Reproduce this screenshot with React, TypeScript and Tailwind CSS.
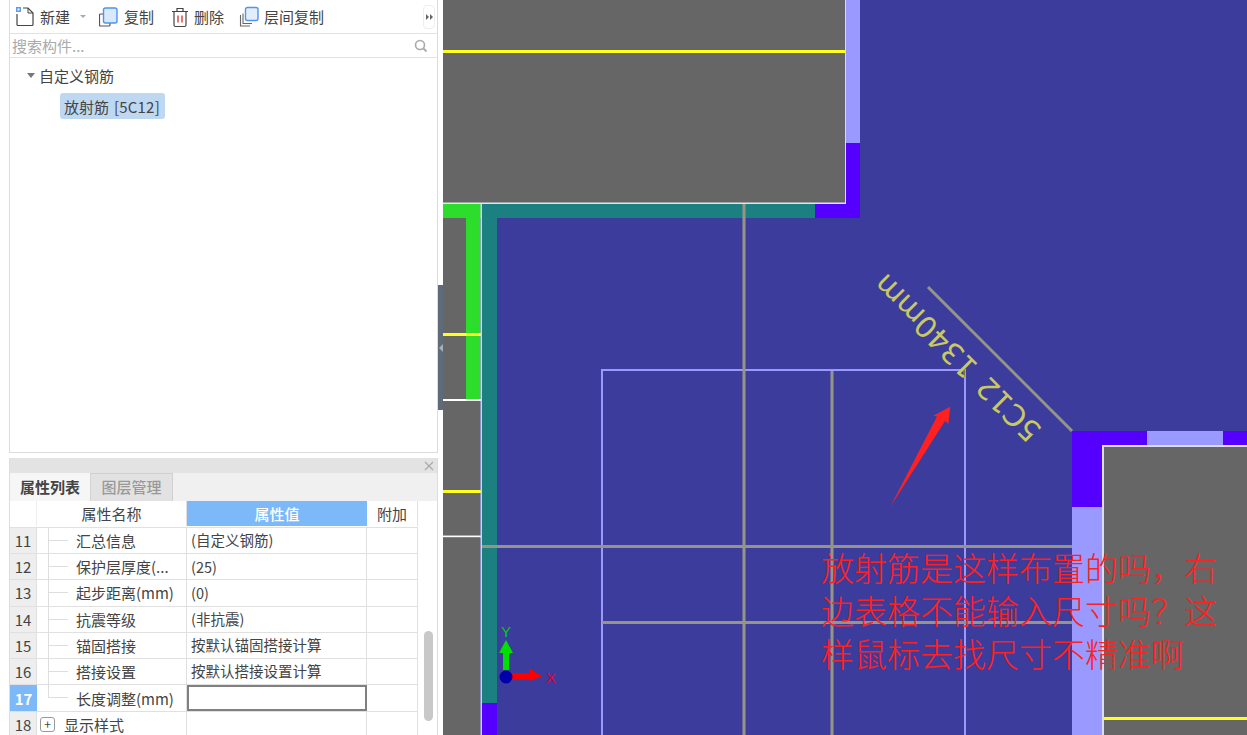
const font = "font-['Noto_Sans_CJK_SC','Liberation_Sans',sans-serif]";

const rows = [
  { n: 11, name: "汇总信息", value: "(自定义钢筋)" },
  { n: 12, name: "保护层厚度(...", value: "(25)" },
  { n: 13, name: "起步距离(mm)", value: "(0)" },
  { n: 14, name: "抗震等级", value: "(非抗震)" },
  { n: 15, name: "锚固搭接", value: "按默认锚固搭接计算" },
  { n: 16, name: "搭接设置", value: "按默认搭接设置计算" },
];

function NewIcon() {
  return (
    <svg width="20" height="22" viewBox="0 0 20 22" fill="none">
      <path d="M2 8v10.500a1 1 0 0 0 1 1h14a1 1 0 0 0 1-1V7l-5-5H8" stroke="#444" strokeWidth="1.2" />
      <path d="M13 2v5h5" stroke="#444" strokeWidth="1" />
      <rect x="1" y="1" width="5" height="5" fill="#5b9bf0" />
      <rect x="2.500" y="2.500" width="2" height="2" fill="#fff" />
    </svg>
  );
}

function CopyIcon() {
  return (
    <svg width="20" height="22" viewBox="0 0 20 22" fill="none">
      <path d="M4 8H1.500a1 1 0 0 0-1 1v10a1 1 0 0 0 1 1H10a1 1 0 0 0 1-1v-2" stroke="#555" strokeWidth="1.2" />
      <rect x="4.500" y="2" width="13.500" height="15" rx="2" fill="#d9e8fb" stroke="#4f94ee" strokeWidth="1.4" />
    </svg>
  );
}

function TrashIcon() {
  return (
    <svg width="18" height="22" viewBox="0 0 18 22" fill="none">
      <path d="M1 5.500h16M6 5V2.500h6V5" stroke="#444" strokeWidth="1.2" />
      <path d="M3 6v13a1.500 1.500 0 0 0 1.500 1.500h9A1.500 1.500 0 0 0 15 19V6" stroke="#444" strokeWidth="1.2" />
      <path d="M7 9.500v7M11 9.500v7" stroke="#e23b3b" strokeWidth="1.4" />
    </svg>
  );
}

function LayerCopyIcon() {
  return (
    <svg width="20" height="22" viewBox="0 0 20 22" fill="none">
      <path d="M1.500 9v11H11M4 7.500v10h9" stroke="#666" strokeWidth="1.1" />
      <rect x="6.500" y="1.500" width="12.500" height="13" rx="2" fill="#e4eefb" stroke="#4f94ee" strokeWidth="1.4" />
    </svg>
  );
}

function ToolItem({ icon, label, className }: { icon: React.ReactNode; label: string; className: string }) {
  return (
    <div className={`flex items-center gap-[5px] ${className}`}>
      {icon}
      <span>{label}</span>
    </div>
  );
}

function ComponentPanel() {
  return (
    <div className="h-[453px] flex flex-col border-x border-b border-[#dcdcdc] bg-white">
      <div className="h-[34px] flex items-center border-b border-[#e2e2e2] pl-[5px] text-[#444]">
        <ToolItem icon={<NewIcon />} label="新建" className="w-[64px]" />
        <span className="w-[20px] pl-[1px]">
          <span className="block w-0 h-0 border-x-[3px] border-x-transparent border-t-[3px] border-t-[#aaa]" />
        </span>
        <ToolItem icon={<CopyIcon />} label="复制" className="w-[72px]" />
        <ToolItem icon={<TrashIcon />} label="删除" className="w-[68px]" />
        <ToolItem icon={<LayerCopyIcon />} label="层间复制" className="w-[100px]" />
        <div className="ml-auto mr-[2px] h-[24px] w-[12px] flex items-center justify-center gap-px rounded-sm border border-[#eee]">
          <span className="w-0 h-0 border-y-[3px] border-y-transparent border-l-[3px] border-l-[#666]" />
          <span className="w-0 h-0 border-y-[3px] border-y-transparent border-l-[3px] border-l-[#666]" />
        </div>
      </div>
      <div className="h-[24px] flex items-center justify-between border-b border-[#e2e2e2] pl-[2px] pr-[9px] text-[#aaa]">
        <span>搜索构件...</span>
        <svg width="14" height="14" viewBox="0 0 14 14" fill="none">
          <circle cx="6" cy="6" r="4.500" stroke="#aaa" strokeWidth="1.6" />
          <path d="M9.500 9.500L12.500 12.500" stroke="#aaa" strokeWidth="1.8" />
        </svg>
      </div>
      <div className="flex-1 pt-[4px] text-[#444]">
        <div className="h-[26px] flex items-center pl-[17px]">
          <span className="w-0 h-0 mr-[4px] border-x-[4px] border-x-transparent border-t-[5px] border-t-[#777]" />
          <span>自定义钢筋</span>
        </div>
        <div className="mt-[5px] ml-[50px] w-[105px] h-[26px] flex items-center pl-[4px] rounded-[3px] bg-[#bfd8f2]">
          <span>放射筋</span>
          <span className="ml-[5px] tracking-[0.2px]">[5C12]</span>
        </div>
      </div>
    </div>
  );
}

function NameCell({ name, last }: { name: string; last?: boolean }) {
  return (
    <div className="w-[150px] h-full flex items-center border-r border-[#e0e0e0] text-[#444]">
      <span className={`ml-[11px] w-[20px] border-l border-[#dedede] ${last ? "h-1/2 self-start border-b" : "h-full flex items-center"}`}>
        {!last && <span className="block h-px w-full bg-[#dedede]" />}
      </span>
      <span className="ml-[8px] whitespace-nowrap">{name}</span>
    </div>
  );
}

function PropertyPanel() {
  return (
    <div className="flex-1 flex flex-col border-x border-[#dcdcdc] bg-white min-h-0">
      <div className="h-[15px] flex items-center justify-end bg-[#e3e3e3] pr-[3px]">
        <svg width="10" height="10" viewBox="0 0 10 10">
          <path d="M1 1L9 9M9 1L1 9" stroke="#aaa" strokeWidth="1.3" />
        </svg>
      </div>
      <div className="h-[28px] flex items-end bg-[#f0f0f0]">
        <div className="w-[81px] h-[28px] pb-[2px] flex items-center justify-center bg-[#f6f6f6] border-r border-[#d4d4d4] font-bold text-[#444]">
          属性列表
        </div>
        <div className="w-[82px] h-[28px] pb-[2px] flex items-center justify-center bg-[#e2e2e2] border-r border-t border-[#d0d0d0] font-medium text-[#999]">
          图层管理
        </div>
      </div>
      <div className="flex-1 flex min-h-0">
        <div className="w-[408px] shrink-0">
          <div className="h-[27px] pb-px flex items-center border-b border-[#e0e0e0]">
            <div className="w-[27px] h-full border-r border-[#eee]" />
            <div className="w-[150px] h-full flex items-center justify-center border-r border-[#e0e0e0] text-[#444]">属性名称</div>
            <div className="w-[180px] h-full flex items-center justify-center bg-[#7db8f8] font-medium text-white">属性值</div>
            <div className="w-[51px] h-full flex items-center justify-center border-r border-[#e0e0e0] text-[#444]">附加</div>
          </div>
          {rows.map((r) => (
            <div key={r.n} className="h-[26.2px] flex items-center border-b border-[#e0e0e0]">
              <div className="w-[27px] h-full flex items-center justify-center bg-[#eeeeee] border-r border-[#e0e0e0] text-[#444]">{r.n}</div>
              <NameCell name={r.name} />
              <div className="w-[180px] h-full flex items-center pl-[4px] border-r border-[#e0e0e0] whitespace-nowrap text-[14.5px] text-[#444]">{r.value}</div>
              <div className="w-[51px] h-full border-r border-[#e0e0e0]" />
            </div>
          ))}
          <div className="h-[27px] flex items-center border-b border-[#e0e0e0]">
            <div className="w-[27px] h-full flex items-center justify-center bg-[#7db8f8] font-bold text-white">17</div>
            <NameCell name="长度调整(mm)" last />
            <div className="w-[180px] h-full border-2 border-[#808080]" />
            <div className="w-[51px] h-full border-r border-[#e0e0e0]" />
          </div>
          <div className="h-[26px] pb-[2px] flex items-center">
            <div className="w-[27px] h-full flex items-center justify-center bg-[#eeeeee] border-r border-[#e0e0e0] text-[#444]">18</div>
            <div className="w-[150px] h-full flex items-center border-r border-[#e0e0e0] text-[#444]">
              <span className="ml-[3px] mr-[9px] w-[15px] h-[15px] flex items-center justify-center rounded-[3px] border border-[#999] text-[12px] leading-none">+</span>
              <span>显示样式</span>
            </div>
            <div className="w-[180px] h-full border-r border-[#e0e0e0]" />
            <div className="w-[51px] h-full border-r border-[#e0e0e0]" />
          </div>
        </div>
        <div className="flex-1 pt-[130px] pl-[6px]">
          <div className="w-[9px] h-[90px] rounded-full bg-[#c8c8c8]" />
        </div>
      </div>
    </div>
  );
}

// coordinates below are in the page's own pixels, the group shifts them into the canvas
function Drawing() {
  const gray = "#666666";
  const violet = "#5500ff";
  const lilac = "#9999ff";
  const rebar = "#959585";
  const yellow = "#ffff20";
  return (
    <svg className="absolute inset-0" width="804" height="735" viewBox="0 0 804 735">
      <g transform="translate(-443 0)">
        <rect x="443" y="0" width="402" height="203" fill={gray} />
        <rect x="443" y="50" width="402" height="3" fill={yellow} />
        <rect x="845" y="0" width="1.500" height="204" fill="#d8d8ee" />
        <rect x="443" y="202.500" width="403" height="2" fill="#e4e4ee" />
        <rect x="846" y="0" width="14" height="143" fill={lilac} />
        <rect x="846" y="143" width="14" height="75" fill={violet} />
        <rect x="815" y="204" width="45" height="14" fill={violet} />
        <rect x="482" y="204" width="333" height="14" fill="#1c8080" />
        <rect x="482" y="204" width="15" height="499" fill="#1c8080" />
        <rect x="482" y="703" width="15" height="32" fill={violet} />
        <rect x="443" y="204" width="38" height="14" fill="#2cdd2c" />
        <rect x="466" y="218" width="14.500" height="181" fill="#2cdd2c" />
        <rect x="443" y="218" width="23" height="181" fill={gray} />
        <rect x="443" y="399" width="38" height="2" fill="#fff" />
        <rect x="443" y="401" width="37.500" height="134.500" fill={gray} />
        <rect x="443" y="535.500" width="38" height="2" fill="#fff" />
        <rect x="443" y="537.500" width="37.500" height="198" fill={gray} />
        <rect x="443" y="333" width="38" height="3" fill={yellow} />
        <rect x="443" y="490" width="38" height="3" fill={yellow} />
        <rect x="480.500" y="204" width="1.500" height="531" fill="#d0d0ff" />
        <path d="M602 735V370H965V735" stroke={lilac} strokeWidth="2" fill="none" />
        <g stroke={rebar} strokeWidth="3">
          <path d="M744 204V735" />
          <path d="M832 371V735" />
          <path d="M482 546.500H1100" />
          <path d="M602 622.500H1072" />
        </g>
        <path d="M928 287L1072 431" stroke={rebar} strokeWidth="3" />
        <rect x="1072" y="431" width="75" height="15" fill={violet} />
        <rect x="1147" y="431" width="76" height="15" fill={lilac} />
        <rect x="1223" y="431" width="24" height="15" fill={violet} />
        <rect x="1072" y="446" width="30" height="61" fill={violet} />
        <rect x="1072" y="507" width="30" height="228" fill={lilac} />
        <rect x="1102" y="445" width="145" height="290" fill="#dcdcf0" />
        <rect x="1104" y="447" width="143" height="288" fill={gray} />
        <rect x="1104" y="717" width="143" height="3" fill={yellow} />
        <path d="M964 369V377" stroke="#77772a" strokeWidth="2" />
        <text
          transform="translate(1043 429) rotate(225)"
          fontFamily="'DejaVu Sans', sans-serif"
          fontSize="29.5"
          wordSpacing="3"
          fill="#c8c864"
        >
          5C12 1340mm
        </text>
        <path d="M950.300 406.700L933.300 415.700L937 416.500L890 507.300L945 421L948.300 424Z" fill="#ff2020" />
        <path d="M506 640L513 653H509V670H503V653H499Z" fill="#00e000" />
        <path d="M512 673H529V668L542 676.500L529 681V679.500H512Z" fill="#ff0000" />
        <circle cx="506" cy="677" r="6.500" fill="#0000a8" />
        <text x="501" y="637" fontFamily="'Liberation Sans', sans-serif" fontSize="15" fill="#00d000">Y</text>
        <text x="546" y="683" fontFamily="'Liberation Sans', sans-serif" fontSize="15" fill="#e00030">X</text>
      </g>
    </svg>
  );
}

export default function App() {
  return (
    <div className={`w-[1247px] h-[735px] flex overflow-hidden bg-white text-[15px] leading-none ${font}`}>
      <div className="w-[438px] shrink-0 flex flex-col pl-[9px]">
        <ComponentPanel />
        <div className="h-[5px] shrink-0" />
        <PropertyPanel />
      </div>
      <div className="w-[5px] shrink-0">
        <div className="h-[285px]" />
        <div className="h-[125px] flex items-center justify-center bg-[#5f6b78]">
          <span className="w-0 h-0 border-y-[4px] border-y-transparent border-r-[4px] border-r-[#a8b0b8]" />
        </div>
      </div>
      <div className="relative flex-1 bg-[#3c3c9c]">
        <Drawing />
        <div className="absolute left-[378px] top-[546px] w-[400px] text-[33px] leading-[43px] font-light text-[#ff2020]">
          <p className="whitespace-nowrap">放射筋是这样布置的吗，右</p>
          <p className="whitespace-nowrap">边表格不能输入尺寸吗？这</p>
          <p className="whitespace-nowrap">样鼠标去找尺寸不精准啊</p>
        </div>
      </div>
    </div>
  );
}
